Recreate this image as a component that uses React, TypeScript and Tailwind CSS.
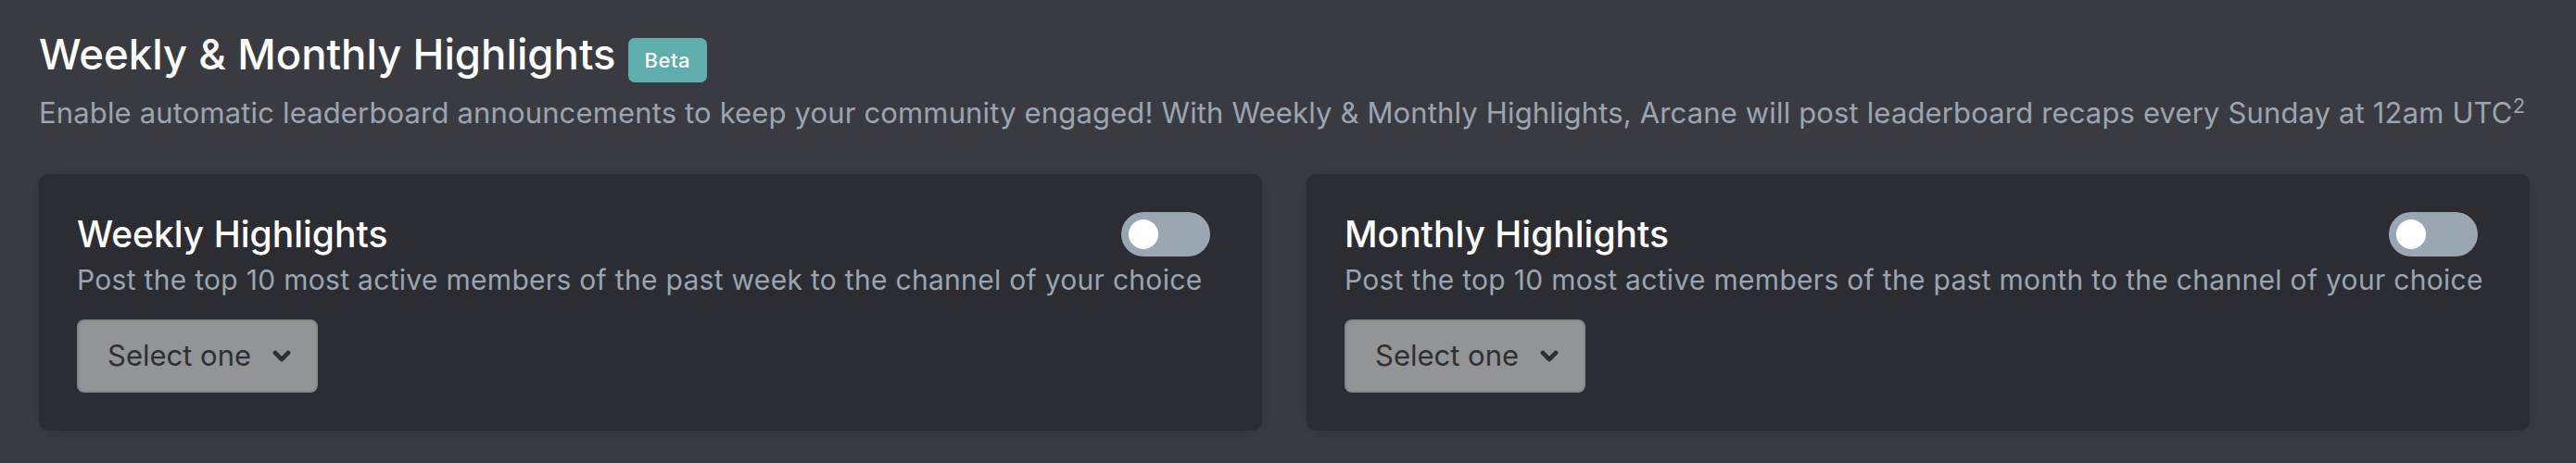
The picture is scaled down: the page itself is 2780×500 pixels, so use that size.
import React from "react";

function Chevron() {
  return (
    <svg width="20" height="14" viewBox="0 0 20 14" className="ml-[23px]">
      <polyline points="3,3 10,10 17,3" fill="none" stroke="#2e2f33" strokeWidth="4.6" strokeLinecap="round" strokeLinejoin="round" />
    </svg>
  );
}

function Card({ title, desc }: { title: string; desc: string }) {
  return (
    <div className="bg-[#2c2d32] rounded-[10px] pt-[41px] pl-[41px] pr-[56px] pb-[41px] shadow-[0_2px_14px_rgba(0,0,0,0.12)]">
      <div className="flex items-center justify-between h-[48px]">
        <div className="text-[39px] leading-[48px] font-medium text-white">{title}</div>
        <div className="w-[96px] h-[48px] rounded-full bg-[#9aa6b2] flex items-center">
          <div className="w-[32px] h-[32px] rounded-full bg-white ml-[8px]" />
        </div>
      </div>
      <div className="mt-[7px] text-[30px] leading-[36px] tracking-[0.3px] text-[#9aa5b1] whitespace-nowrap">{desc}</div>
      <div className="mt-[25px] w-[260px] h-[79px] rounded-[8px] bg-[#939496] border-[2px] border-[#86878a] flex items-center pl-[31px] text-[31px] text-[#2e2f33]">
        <span>Select one</span>
        <Chevron />
      </div>
    </div>
  );
}

export default function App() {
  return (
    <div className="w-full h-[500px] bg-[#3a3b40] pl-[42px] pr-[50px] pt-[32px]" style={{ fontFamily: "Inter, 'Noto Sans', sans-serif" }}>
      <div className="flex items-start h-[54px]">
        <h1 className="text-[45.5px] leading-[54px] font-medium text-white">Weekly &amp; Monthly Highlights</h1>
        <span className="ml-[13px] mt-[9px] h-[48px] px-[18px] rounded-[7px] bg-[#5fadad] text-white text-[22px] tracking-[0.5px] font-medium leading-[48px]">Beta</span>
      </div>
      <p className="mt-[18px] text-[31px] leading-[36px] tracking-[0.15px] text-[#9aa5b1] whitespace-nowrap">
        Enable automatic leaderboard announcements to keep your community engaged! With Weekly &amp; Monthly Highlights, Arcane will post leaderboard recaps every Sunday at 12am UTC<sup className="text-[22px]">2</sup>
      </p>
      <div className="mt-[48px] grid grid-cols-2 gap-[48px]">
        <Card title="Weekly Highlights" desc="Post the top 10 most active members of the past week to the channel of your choice" />
        <Card title="Monthly Highlights" desc="Post the top 10 most active members of the past month to the channel of your choice" />
      </div>
    </div>
  );
}
